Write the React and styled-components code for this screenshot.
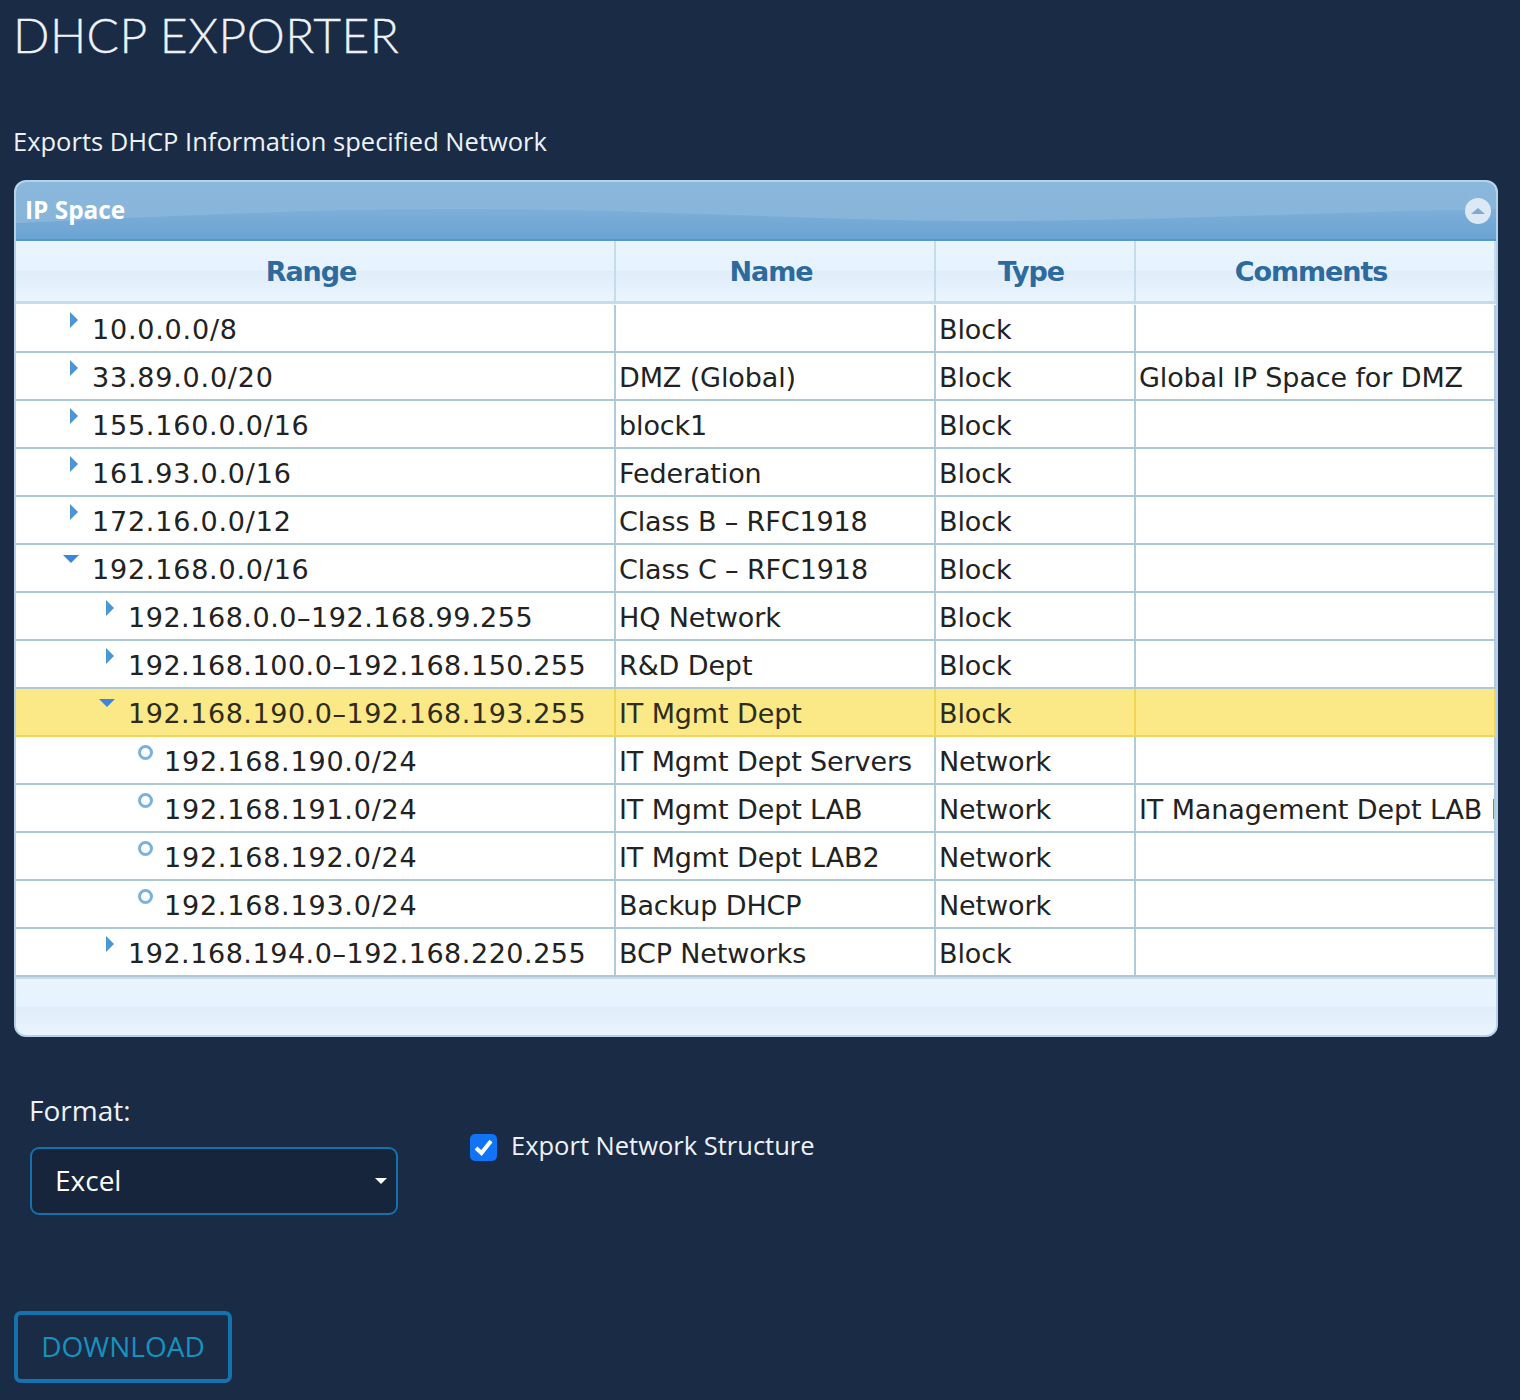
import React from "react";
import styled, { createGlobalStyle } from "styled-components";

const GlobalStyle = createGlobalStyle`
  html, body {
    margin: 0;
    padding: 0;
    background: #1a2b46;
  }
`;

const Page = styled.div`
  box-sizing: border-box;
  width: 1520px;
  height: 1400px;
  padding: 0 22px 0 14px;
  background: #1a2b46;
  color: #eef2f8;
  font-family: "Open Sans", "Noto Sans", sans-serif;
  overflow: hidden;
`;

const Title = styled.h1`
  margin: 0 0 0 -1px;
  padding-top: 6px;
  height: 58px;
  line-height: 58px;
  font-family: Lato, sans-serif;
  font-weight: 300;
  font-size: 48px;
  letter-spacing: 0.45px;
  -webkit-text-stroke: 0.3px #eef2f8;
  color: #eef2f8;
`;

const Subtitle = styled.p`
  margin: 59px 0 0 -1px;
  height: 36px;
  line-height: 36px;
  font-size: 25.5px;
`;

const Panel = styled.section`
  box-sizing: border-box;
  width: 1484px;
  height: 857px;
  margin-top: 21px;
  border: 2px solid #b5d2ea;
  border-radius: 12px;
  overflow: hidden;
  background: #e4f0fb;
  display: flex;
  flex-direction: column;
`;

const PanelHeader = styled.header`
  position: relative;
  box-sizing: border-box;
  height: 59px;
  flex: none;
  display: flex;
  align-items: center;
  justify-content: space-between;
  padding: 0 5px 0 9px;
  background: linear-gradient(#8ab7db, #86b4da);
  border-bottom: 2px solid #5597cb;
`;

const Wave = styled.svg`
  position: absolute;
  left: 0;
  top: 0;
  width: 100%;
  height: 100%;
`;

const PanelTitle = styled.h2`
  position: relative;
  margin: 0 0 3px;
  font-family: "Open Sans", "Noto Sans", sans-serif;
  font-weight: 700;
  font-size: 24.4px;
  color: #fff;
`;

const CollapseButton = styled.button`
  position: relative;
  box-sizing: border-box;
  width: 26px;
  height: 26px;
  padding: 0;
  border: none;
  border-radius: 50%;
  background: #dce9f5;
  display: flex;
  align-items: center;
  justify-content: center;

  &::before {
    content: "";
    width: 0;
    height: 0;
    border-left: 7px solid transparent;
    border-right: 7px solid transparent;
    border-bottom: 6px solid #7fa9cf;
  }
`;

const TreeGrid = styled.div`
  flex: none;
  width: 1480px;
  font-family: "DejaVu Sans", sans-serif;
`;

const columns = "600px 320px 200px 360px";

const HeaderRow = styled.div`
  display: grid;
  grid-template-columns: ${columns};
  height: 63px;
  box-sizing: border-box;
  border-bottom: 3px solid #c7dcea;
  background: linear-gradient(#e9f5fe 0, #e6f3fe 49%, #dfedfa 50%, #eaf5fe 100%);
`;

const HeaderCell = styled.div`
  box-sizing: border-box;
  padding-right: 8px;
  border-right: 2px solid #c7dcea;
  text-align: center;
  font-weight: 700;
  font-size: 27px;
  line-height: 61px;
  letter-spacing: -1.1px;
  color: #2d6a9d;
`;

const RowList = styled.div`
  padding-top: 1px;
  background: #fff;
`;

const Row = styled.div`
  display: grid;
  grid-template-columns: ${columns};
  height: 48px;
  box-sizing: border-box;
  border-bottom: 2px solid ${(p) => (p.$selected ? "#f2d552" : "#aec8d8")};
  background: ${(p) => (p.$selected ? "#fbe988" : "#fff")};
  color: ${(p) => (p.$selected ? "#2e2c1a" : "#222")};
`;

const Cell = styled.div`
  box-sizing: border-box;
  min-width: 0;
  display: flex;
  align-items: center;
  padding-left: 3px;
  padding-top: 2px;
  border-right: 2px solid ${(p) => (p.$selected ? "#f2d552" : "#b1cbde")};
  font-size: 27px;
  letter-spacing: -0.12px;
  white-space: pre;
  overflow: hidden;
`;

const RangeCell = styled(Cell)`
  position: relative;
  padding-left: ${(p) => 76 + p.$depth * 36}px;
  letter-spacing: ${(p) => (p.$span ? "0.53px" : "0.78px")};
`;

const Marker = styled.span`
  position: absolute;
  left: ${(p) => 47 + p.$depth * 36}px;
  top: 7px;
  width: 18px;
  height: 16px;
  display: flex;
  align-items: center;
  justify-content: flex-start;
`;

const ArrowRight = styled.i`
  display: block;
  width: 0;
  height: 0;
  margin-left: 7px;
  border-top: 8px solid transparent;
  border-bottom: 8px solid transparent;
  border-left: 8px solid #4a95d6;
`;

const ArrowDown = styled.i`
  display: block;
  width: 0;
  height: 0;
  margin-top: -2px;
  border-left: 8px solid transparent;
  border-right: 8px solid transparent;
  border-top: 8px solid #3b86dc;
`;

const Ring = styled.i`
  display: block;
  flex: none;
  box-sizing: border-box;
  width: 15px;
  height: 15px;
  margin-left: 3px;
  border: 3px solid #7cb1df;
  border-radius: 50%;
`;

const PanelFooter = styled.div`
  flex: 1;
  border-top: 2px solid #c7dcea;
  background: linear-gradient(#e9f4fe 0, #e6f2fd 49%, #dfedfa 50%, #e9f4fe 100%);
`;

const FormRow = styled.div`
  display: flex;
  align-items: flex-start;
  margin-top: 55px;
  padding-left: 16px;
`;

const FormatField = styled.div`
  width: 368px;
`;

const FieldLabel = styled.label`
  display: block;
  height: 38px;
  line-height: 36px;
  font-size: 28px;
  margin-left: -1px;
`;

const SelectBox = styled.div`
  box-sizing: border-box;
  height: 68px;
  margin-top: 17px;
  padding: 0 9px 2px 23px;
  display: flex;
  align-items: center;
  justify-content: space-between;
  border: 2px solid #1670ab;
  border-radius: 9px;
  background: #16253b;
  font-size: 28px;
  color: #fff;

  &::after {
    content: "";
    width: 0;
    height: 0;
    margin-top: 2px;
    border-left: 6px solid transparent;
    border-right: 6px solid transparent;
    border-top: 6px solid #fff;
  }
`;

const CheckLabel = styled.label`
  display: flex;
  align-items: center;
  gap: 14px;
  margin: 33px 0 0 72px;
  height: 40px;
  font-size: 25.5px;
`;

const CheckBox = styled.span`
  box-sizing: border-box;
  width: 27px;
  height: 27px;
  border-radius: 5px;
  background: #1074f5;
  display: flex;
  align-items: center;
  justify-content: center;
  margin-top: 4px;
`;

const DownloadButton = styled.button`
  display: block;
  box-sizing: border-box;
  width: 218px;
  height: 72px;
  margin-top: 96px;
  padding: 0 0 2px;
  border: 4px solid #1472ae;
  border-radius: 7px;
  background: transparent;
  font-family: "Open Sans", "Noto Sans", sans-serif;
  font-size: 28px;
  color: #1592bd;
`;

const rows = [
  { range: "10.0.0.0/8", name: "", type: "Block", comments: "", depth: 0, mark: "closed" },
  { range: "33.89.0.0/20", name: "DMZ (Global)", type: "Block", comments: "Global IP Space for DMZ", depth: 0, mark: "closed" },
  { range: "155.160.0.0/16", name: "block1", type: "Block", comments: "", depth: 0, mark: "closed" },
  { range: "161.93.0.0/16", name: "Federation", type: "Block", comments: "", depth: 0, mark: "closed" },
  { range: "172.16.0.0/12", name: "Class B – RFC1918", type: "Block", comments: "", depth: 0, mark: "closed" },
  { range: "192.168.0.0/16", name: "Class C – RFC1918", type: "Block", comments: "", depth: 0, mark: "open" },
  { range: "192.168.0.0–192.168.99.255", name: "HQ Network", type: "Block", comments: "", depth: 1, mark: "closed" },
  { range: "192.168.100.0–192.168.150.255", name: "R&D Dept", type: "Block", comments: "", depth: 1, mark: "closed" },
  { range: "192.168.190.0–192.168.193.255", name: "IT Mgmt Dept", type: "Block", comments: "", depth: 1, mark: "open", selected: true },
  { range: "192.168.190.0/24", name: "IT Mgmt Dept Servers", type: "Network", comments: "", depth: 2, mark: "leaf" },
  { range: "192.168.191.0/24", name: "IT Mgmt Dept LAB", type: "Network", comments: "IT Management Dept LAB Network", depth: 2, mark: "leaf" },
  { range: "192.168.192.0/24", name: "IT Mgmt Dept LAB2", type: "Network", comments: "", depth: 2, mark: "leaf" },
  { range: "192.168.193.0/24", name: "Backup DHCP", type: "Network", comments: "", depth: 2, mark: "leaf" },
  { range: "192.168.194.0–192.168.220.255", name: "BCP Networks", type: "Block", comments: "", depth: 1, mark: "closed" },
];

const markers = {
  closed: <ArrowRight />,
  open: <ArrowDown />,
  leaf: <Ring />,
};

function App() {
  return (
    <Page>
      <GlobalStyle />
      <Title>DHCP EXPORTER</Title>
      <Subtitle>Exports DHCP Information specified Network</Subtitle>

      <Panel>
        <PanelHeader>
          <Wave viewBox="0 0 1480 57" preserveAspectRatio="none" aria-hidden="true">
            <defs>
              <linearGradient id="waveFill" x1="0" y1="0" x2="0" y2="1">
                <stop offset="0" stopColor="#7dafd8" />
                <stop offset="1" stopColor="#6aa3d3" />
              </linearGradient>
            </defs>
            <path
              d="M0 41 C120 36 260 28 420 27 C620 26 780 38 950 39 C1120 40 1300 30 1480 27 L1480 57 L0 57 Z"
              fill="url(#waveFill)"
            />
          </Wave>
          <PanelTitle>IP Space</PanelTitle>
          <CollapseButton type="button" aria-label="Collapse" />
        </PanelHeader>

        <TreeGrid>
          <HeaderRow>
            <HeaderCell>Range</HeaderCell>
            <HeaderCell>Name</HeaderCell>
            <HeaderCell>Type</HeaderCell>
            <HeaderCell>Comments</HeaderCell>
          </HeaderRow>
          <RowList>
            {rows.map((row) => (
              <Row key={row.range} $selected={row.selected}>
                <RangeCell
                  $depth={row.depth}
                  $selected={row.selected}
                  $span={row.range.includes("–")}
                >
                  <Marker $depth={row.depth}>{markers[row.mark]}</Marker>
                  {row.range}
                </RangeCell>
                <Cell $selected={row.selected}>{row.name}</Cell>
                <Cell $selected={row.selected}>{row.type}</Cell>
                <Cell $selected={row.selected}>{row.comments}</Cell>
              </Row>
            ))}
          </RowList>
        </TreeGrid>

        <PanelFooter />
      </Panel>

      <FormRow>
        <FormatField>
          <FieldLabel>Format:</FieldLabel>
          <SelectBox>Excel</SelectBox>
        </FormatField>
        <CheckLabel>
          <CheckBox>
            <svg width="23" height="23" viewBox="0 0 23 23" fill="none">
              <path d="M4 12 L9.5 17 L19 5" stroke="#fff" strokeWidth="4" />
            </svg>
          </CheckBox>
          Export Network Structure
        </CheckLabel>
      </FormRow>

      <DownloadButton type="button">DOWNLOAD</DownloadButton>
    </Page>
  );
}

export default App;
